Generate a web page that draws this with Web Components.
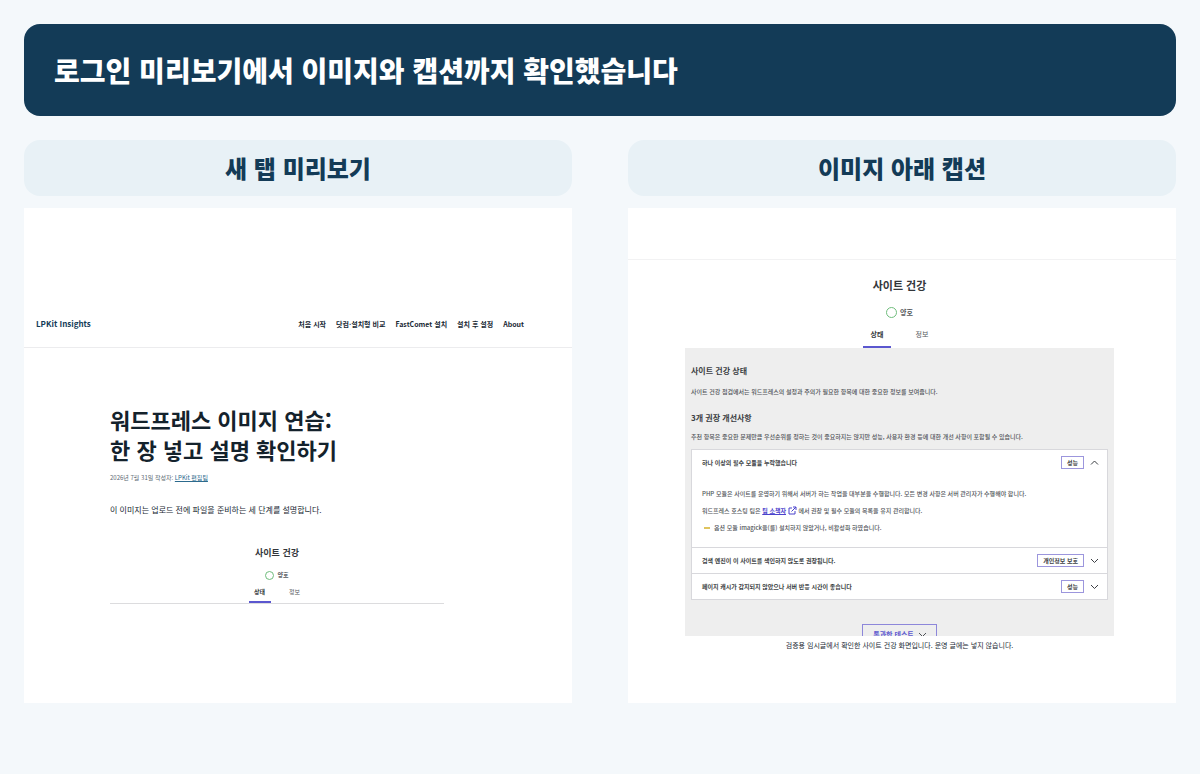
<!DOCTYPE html>
<html lang="ko">
<head>
<meta charset="UTF-8">
<meta name="viewport" content="width=device-width, initial-scale=1.0">
<title>로그인 미리보기</title>
<style>
  :root {
    --navy: #133b57;
    --ink: #182833;
    --accent: #5b57cf;
    --line: #ececee;
  }
  body {
    margin: 0;
    min-height: 100vh;
    background: #f4f8fb;
    color: var(--ink);
    font-family: "Noto Sans CJK KR", sans-serif;
  }
</style>
</head>
<body>
<preview-page>
  <page-banner slot="banner">로그인 미리보기에서 이미지와 캡션까지 확인했습니다</page-banner>
  <preview-column>
    <span slot="label">새 탭 미리보기</span>
    <blog-post></blog-post>
  </preview-column>
  <preview-column>
    <span slot="label">이미지 아래 캡션</span>
    <caption-view></caption-view>
  </preview-column>
</preview-page>

<script>
class PreviewPage extends HTMLElement {
  constructor() {
    super();
    this.attachShadow({ mode: 'open' });
  }
  connectedCallback() {
    this.shadowRoot.innerHTML = /*html*/`
      <style>
        :host { display: block; padding: 24px; }
        main {
          display: grid;
          grid-template-columns: 1fr 1fr;
          gap: 56px;
          margin-top: 24px;
        }
        @media (max-width: 768px) {
          main { grid-template-columns: 1fr; gap: 24px; }
        }
      </style>
      <slot name="banner"></slot>
      <main><slot></slot></main>
    `;
  }
}

class PageBanner extends HTMLElement {
  constructor() {
    super();
    this.attachShadow({ mode: 'open' });
  }
  connectedCallback() {
    this.shadowRoot.innerHTML = /*html*/`
      <style>
        :host {
          display: block;
          padding: 26px 30px;
          border-radius: 16px;
          background: var(--navy);
          color: #fff;
        }
        h1 { margin: 0; font-size: 28px; line-height: 40px; font-weight: 900; }
      </style>
      <h1><slot></slot></h1>
    `;
  }
}

class PreviewColumn extends HTMLElement {
  constructor() {
    super();
    this.attachShadow({ mode: 'open' });
  }
  connectedCallback() {
    this.shadowRoot.innerHTML = /*html*/`
      <style>
        :host { display: flex; flex-direction: column; gap: 12px; min-width: 0; }
        h2 {
          margin: 0;
          padding: 10px;
          border-radius: 16px;
          background: #e8f1f6;
          color: var(--navy);
          font-size: 24px;
          line-height: 36px;
          font-weight: 900;
          text-align: center;
        }
        .panel { flex: 1; background: #fff; }
      </style>
      <h2><slot name="label"></slot></h2>
      <div class="panel"><slot></slot></div>
    `;
  }
}

// title, status ring and tabs; the "large" attribute gives the bigger size
class HealthHeader extends HTMLElement {
  constructor() {
    super();
    this.attachShadow({ mode: 'open' });
  }
  connectedCallback() {
    this.shadowRoot.innerHTML = /*html*/`
      <style>
        :host {
          --title: 9px; --small: 6px; --ring: 7px; --tab: 22px; --gap: 13px;
          --space: 7px; --below: 2px; --foot: 3px;
          display: flex;
          flex-direction: column;
          align-items: center;
          border-bottom: 1px solid #dcdcde;
          color: #33363a;
        }
        :host([large]) {
          --title: 11px; --small: 7px; --ring: 9px; --tab: 28px; --gap: 17px;
          --space: 12px; --below: 7px; --foot: 6px;
          border-bottom: 0;
        }
        h3 { margin: 0; font-size: var(--title); line-height: 16px; }
        .status {
          display: flex;
          align-items: center;
          gap: 3px;
          margin: var(--space) 0 var(--below);
          font-size: var(--small);
          line-height: 14px;
          font-weight: bold;
          color: #55585c;
        }
        .ring {
          width: var(--ring);
          height: var(--ring);
          border: 1px solid #6fbd7c;
          border-radius: 50%;
        }
        .tabs { display: flex; gap: var(--gap); }
        button {
          width: var(--tab);
          padding: 2px 0 var(--foot);
          border: 0;
          border-bottom: 2px solid transparent;
          background: none;
          font: inherit;
          font-size: var(--small);
          line-height: 12px;
          color: #55585c;
          white-space: nowrap;
        }
        button[aria-selected="true"] { border-color: var(--accent); font-weight: bold; color: #33363a; }
      </style>
      <h3>사이트 건강</h3>
      <div class="status"><span class="ring"></span>양호</div>
      <div class="tabs" role="tablist">
        <button role="tab" aria-selected="true">상태</button>
        <button role="tab" aria-selected="false">정보</button>
      </div>
    `;
  }
}

class BlogPost extends HTMLElement {
  constructor() {
    super();
    this.attachShadow({ mode: 'open' });
  }
  connectedCallback() {
    this.shadowRoot.innerHTML = /*html*/`
      <style>
        :host { display: block; }
        header {
          display: flex;
          justify-content: space-between;
          align-items: center;
          padding: 108px 48px 15px 12px;
          border-bottom: 1px solid var(--line);
          line-height: 16px;
          font-weight: bold;
        }
        .logo { font-size: 8px; color: var(--navy); }
        nav { display: flex; gap: 10px; font-size: 7px; }
        a { color: inherit; text-decoration: none; }
        article { padding: 56px 128px 99px 86px; }
        h1 { margin: 0; font-size: 22px; line-height: 30px; color: #14222c; }
        .meta { margin: 8px 0 20px; font-size: 6px; line-height: 12px; color: #5a6872; }
        .meta a { color: #2c6a8d; text-decoration: underline; }
        p { margin: 0 0 29px; font-size: 8px; line-height: 12px; }
      </style>
      <header>
        <a class="logo" href="#">LPKit Insights</a>
        <nav>
          <a href="#">처음 시작</a>
          <a href="#">닷컴·설치형 비교</a>
          <a href="#">FastComet 설치</a>
          <a href="#">설치 후 설정</a>
          <a href="#">About</a>
        </nav>
      </header>
      <article>
        <h1>워드프레스 이미지 연습:<br>한 장 넣고 설명 확인하기</h1>
        <div class="meta">2026년 7월 31일 작성자: <a href="#">LPKit 편집팀</a></div>
        <p>이 이미지는 업로드 전에 파일을 준비하는 세 단계를 설명합니다.</p>
        <health-header></health-header>
      </article>
    `;
  }
}

class HealthItem extends HTMLElement {
  constructor() {
    super();
    this.attachShadow({ mode: 'open' });
  }
  connectedCallback() {
    const open = this.hasAttribute('open');
    this.shadowRoot.innerHTML = /*html*/`
      <style>
        :host { display: block; background: #fff; }
        button {
          display: flex;
          align-items: center;
          gap: 6px;
          width: 100%;
          padding: 6px 8px 6px 10px;
          border: 0;
          background: none;
          font: inherit;
          line-height: 13px;
          font-weight: bold;
          color: #3c3f44;
          text-align: left;
        }
        .title { flex: 1; }
        .badge { padding: 0 5px; border: 1px solid #9c96dd; line-height: 11px; }
        svg { width: 9px; height: 9px; fill: none; stroke: #3c3f44; }
        .body { padding: 7px 10px; }
      </style>
      <button aria-expanded="${open}">
        <span class="title">${this.getAttribute('label')}</span>
        <span class="badge">${this.getAttribute('badge')}</span>
        <svg viewBox="0 0 9 9"><path d="${open ? 'M1 6.5 4.5 3 8 6.5' : 'M1 3 4.5 6.5 8 3'}"/></svg>
      </button>
      ${open ? '<div class="body"><slot></slot></div>' : ''}
    `;
  }
}

class CaptionView extends HTMLElement {
  constructor() {
    super();
    this.attachShadow({ mode: 'open' });
  }
  connectedCallback() {
    this.shadowRoot.innerHTML = /*html*/`
      <style>
        :host { display: block; padding-top: 51px; }
        figure {
          margin: 0;
          padding: 17px 62px 51px 57px;
          border-top: 1px solid #f2f2f3;
        }
        .health {
          padding: 17px 6px 0;
          background: #eeeeee;
          color: #505358;
          font-size: 6px;
          line-height: 10px;
          font-weight: 500;
        }
        h4 { margin: 0; font-size: 8px; line-height: 12px; color: #3c3f44; }
        p { margin: 0; }
        .health > p { margin: 10px 0 15px; }
        .health > p + h4 + p { margin: 8px 0 7px; }
        .list { display: grid; gap: 1px; border: 1px solid #d8d8dc; background: #d8d8dc; }
        .list p, ul { margin: 7px 0; }
        ul { padding: 0; list-style: none; }
        li { display: flex; align-items: center; gap: 4px; padding-left: 2px; }
        li::before { content: ""; width: 6px; height: 2px; background: #dfc45e; }
        a { color: #4a42cc; font-weight: bold; }
        svg { fill: none; stroke: #4a42cc; }
        .ext { width: 9px; height: 9px; vertical-align: -2px; }
        .more { display: flex; justify-content: center; height: 12px; margin-top: 24px; overflow: hidden; }
        .more button {
          display: flex;
          align-items: center;
          gap: 4px;
          height: 20px;
          padding: 0 9px 0 10px;
          border: 1px solid #8d87da;
          background: none;
          color: var(--accent);
          font: inherit;
          font-size: 7px;
          font-weight: bold;
          white-space: nowrap;
        }
        .more svg { width: 9px; height: 9px; stroke: #505358; }
        figcaption { padding-top: 3px; font-size: 7px; line-height: 12px; text-align: center; }
      </style>
      <figure>
        <health-header large></health-header>
        <div class="health">
          <h4>사이트 건강 상태</h4>
          <p>사이트 건강 점검에서는 워드프레스의 설정과 주의가 필요한 항목에 대한 중요한 정보를 보여줍니다.</p>
          <h4>3개 권장 개선사항</h4>
          <p>추천 항목은 중요한 문제만큼 우선순위를 정하는 것이 중요하지는 않지만 성능, 사용자 환경 등에 대한 개선 사항이 포함될 수 있습니다.</p>
          <div class="list">
            <health-item open label="하나 이상의 필수 모듈을 누락했습니다" badge="성능">
              <p>PHP 모듈은 사이트를 운영하기 위해서 서버가 하는 작업을 대부분을 수행합니다. 모든 변경 사항은 서버 관리자가 수행해야 합니다.</p>
              <p>워드프레스 호스팅 팀은 <a href="#">팀 소책자</a> <svg class="ext" viewBox="0 0 9 9"><path d="M4 2H1v6h6V5M5 1h3v3M8 1 3.5 5.5"/></svg> 에서 권장 및 필수 모듈의 목록을 유지 관리합니다.</p>
              <ul><li>옵션 모듈 imagick을(를) 설치하지 않았거나, 비활성화 하였습니다.</li></ul>
            </health-item>
            <health-item label="검색 엔진이 이 사이트를 색인하지 않도록 권장됩니다." badge="개인정보 보호"></health-item>
            <health-item label="페이지 캐시가 감지되지 않았으나 서버 반응 시간이 좋습니다" badge="성능"></health-item>
          </div>
          <div class="more">
            <button>통과한 테스트 <svg viewBox="0 0 9 9"><path d="M1 3 4.5 6.5 8 3"/></svg></button>
          </div>
        </div>
        <figcaption>검증용 임시글에서 확인한 사이트 건강 화면입니다. 운영 글에는 넣지 않습니다.</figcaption>
      </figure>
    `;
  }
}

customElements.define('preview-page', PreviewPage);
customElements.define('page-banner', PageBanner);
customElements.define('preview-column', PreviewColumn);
customElements.define('health-header', HealthHeader);
customElements.define('blog-post', BlogPost);
customElements.define('health-item', HealthItem);
customElements.define('caption-view', CaptionView);
</script>
</body>
</html>
